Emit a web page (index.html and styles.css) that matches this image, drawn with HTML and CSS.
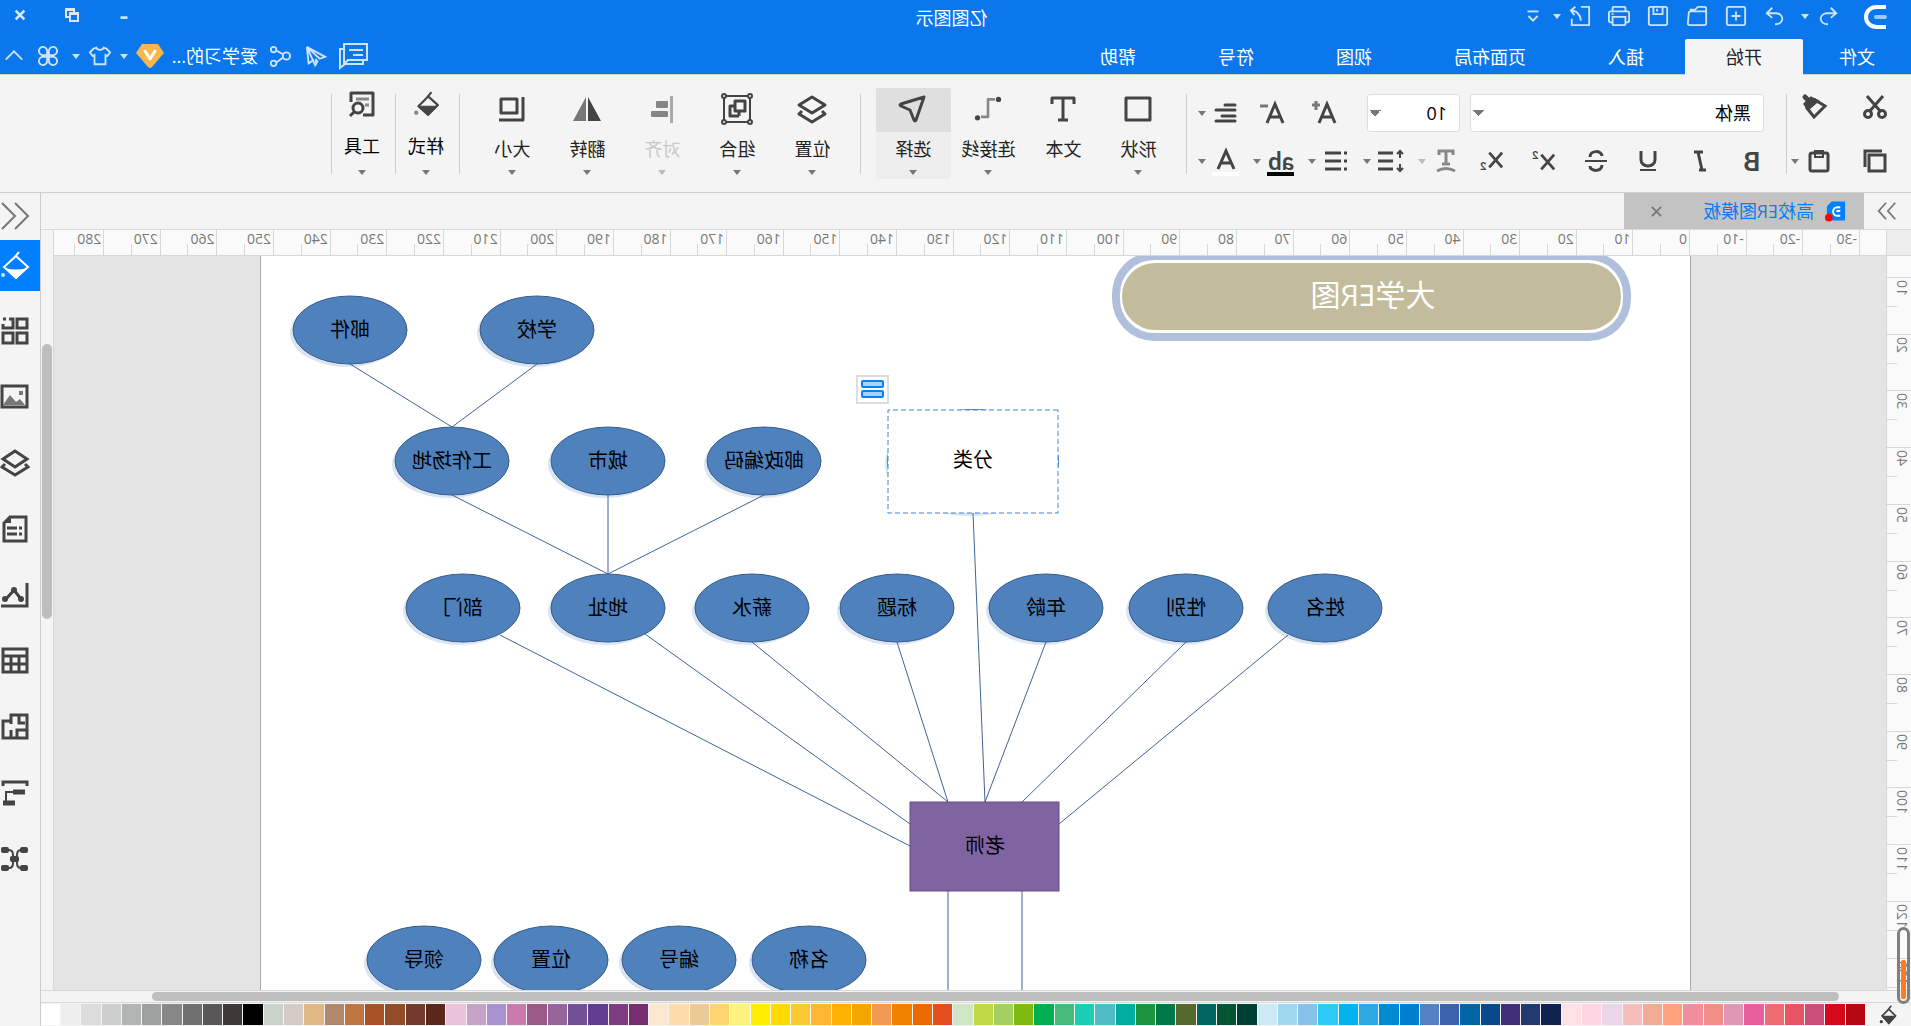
FILE: index.html
```html
<!DOCTYPE html>
<html lang="zh-CN">
<head>
<meta charset="utf-8">
<title>亿图图示</title>
<link rel="stylesheet" href="styles.css">
</head>
<body>
<div class="app">
  <header class="titlebar">
    <div class="quick">
      <svg class="logo" viewBox="0 0 24 26"><path d="M1 3h9c7 0 11 4.500 11 10s-4 10-11 10H1" fill="none" stroke="#fff" stroke-width="4"/><path d="M2 13h9" stroke="#9cc8fa" stroke-width="4" stroke-linecap="round"/></svg>
      <button class="qbtn" aria-label="撤销"><svg viewBox="0 0 24 24"><path d="M9 3 3 9l6 5M3 9h10a7 6 0 0 1 0 12h-1"/></svg></button>
      <button class="caret" aria-label="撤销列表"></button>
      <button class="qbtn redo" aria-label="重做"><svg viewBox="0 0 24 24"><path d="m15 3 6 6-6 5M21 9H11a7 6 0 0 0 0 12h1"/></svg></button>
      <button class="qbtn" aria-label="新建"><svg viewBox="0 0 24 24"><rect x="2" y="2" width="20" height="20" rx="2"/><path d="M12 7v10M7 12h10"/></svg></button>
      <button class="qbtn" aria-label="打开"><svg viewBox="0 0 24 24"><path d="M2 7h17q2 0 2 2l1 11q0 2-2 2H4q-2 0-2-2zM2 7V4q0-2 2-2h7l3 3h5v2"/></svg></button>
      <button class="qbtn" aria-label="保存"><svg viewBox="0 0 24 24"><rect x="2" y="2" width="20" height="20" rx="2"/><path d="M7 2v8h10V2M13 4v3"/></svg></button>
      <button class="qbtn" aria-label="打印"><svg viewBox="0 0 24 24"><path d="M5 7V3q0-1 1-1h12q1 0 1 1v4M5 19H3q-2 0-2-2V9q0-2 2-2h18q2 0 2 2v8q0 2-2 2h-2M5 13h14v8q0 1-1 1H6q-1 0-1-1zM18 10h2"/></svg></button>
      <button class="qbtn" aria-label="导出"><svg viewBox="0 0 24 24"><path d="M11 2H2v20h19V15M22 6c-7 0-10 4-11 11M17 2l5 4-4 5"/></svg></button>
      <button class="caret" aria-label="导出选项"></button>
      <button class="qbtn" aria-label="更多"><svg viewBox="0 0 24 24"><path d="M6 7h12" stroke-width="2"/><path d="m7 12 5 5 5-5"/></svg></button>
    </div>
    <h1 class="title">亿图图示</h1>
    <div class="winctl">
      <button aria-label="最小化"><svg viewBox="0 0 16 16"><path d="M4 11h8" stroke-width="3"/></svg></button>
      <button aria-label="还原"><svg viewBox="0 0 14 14"><path d="M1 5h8v8H1zM5 5V1h8v8H9M1 6h8M5 2h8"/></svg></button>
      <button aria-label="关闭"><svg viewBox="0 0 16 16"><path d="m3 3 10 10M13 3 3 13" stroke-width="3"/></svg></button>
    </div>
  </header>

  <div class="menubar">
    <nav class="menu">
      <a href="#file" class="file">文件</a>
      <a href="#home" class="active">开始</a>
      <a href="#insert">插入</a>
      <a href="#layout">页面布局</a>
      <a href="#view">视图</a>
      <a href="#symbol">符号</a>
      <a href="#help">帮助</a>
    </nav>
    <div class="user">
      <button class="u32" aria-label="消息"><svg viewBox="0 0 32 28"><path d="M3 2h23v20l-4-4H3zM21 8H7M17 13H7"/><path d="M26 7h4v19l-5-4H7v-4"/></svg></button>
      <button class="u28" aria-label="发送"><svg viewBox="0 0 24 24"><path d="m22 2-20 11 6 2 14-13-9 20-3-5M12 15v7M22 2l-2 18-6-4"/></svg></button>
      <button class="u28" aria-label="分享"><svg viewBox="0 0 24 24"><circle cx="5" cy="12" r="4"/><circle cx="19" cy="5" r="3"/><circle cx="19" cy="20" r="3"/><path d="m9 10 7-4M9 14l7 5"/></svg></button>
      <a class="name" href="#account">爱学习的...</a>
      <svg class="vip" viewBox="0 0 28 24"><path d="M6 0h16l6 9-12 14q-2 2-4 0L0 9z" fill="#f8b64c"/><path d="m9 7 5 8 5-8" fill="none" stroke="#fff" stroke-width="3" stroke-linecap="round" stroke-linejoin="round"/></svg>
      <button class="caret" aria-label="会员"></button>
      <button class="u24" aria-label="皮肤"><svg viewBox="0 0 24 24"><path d="M8 3c1 3 7 3 8 0l3 1 4 4-3 4-2-1v10H6V11l-2 1-3-4 4-4z"/></svg></button>
      <button class="caret skins" aria-label="皮肤列表"></button>
      <button class="u24" aria-label="应用"><svg viewBox="0 0 24 24"><path d="M11 11V7a4.500 4.500 0 1 0-4 4zM13 11V7a4.500 4.500 0 1 1 4 4zM11 13v4a4.500 4.500 0 1 1-4-4zM13 13v4a4.500 4.500 0 1 0 4-4z"/></svg></button>
      <button class="u28" aria-label="收起"><svg viewBox="0 0 24 24"><path d="m3 16 9-9 9 9"/></svg></button>
    </div>
  </div>

  <section class="ribbon">
    <div class="clip">
      <div class="line">
        <button class="tool" aria-label="剪切"><svg viewBox="0 0 24 24"><path d="m4 1 14 16M20 1 6 17"/><circle cx="5" cy="19" r="3.500"/><circle cx="19" cy="19" r="3.500"/></svg></button>
        <button class="tool second painter" aria-label="格式刷"><svg viewBox="0 0 24 24"><path d="m2 11 10-6 8 8-7 9z"/><path d="m10 6 6-3 6 6-3 5z" fill="currentColor"/><path d="m18 6 4-4" stroke-width="5" stroke-linecap="round"/></svg></button>
      </div>
      <div class="line">
        <button class="tool" aria-label="复制"><svg viewBox="0 0 24 24"><rect x="2" y="6" width="16" height="16"/><path d="M5 2h17v16"/></svg></button>
        <button class="tool second" aria-label="粘贴"><svg viewBox="0 0 24 24"><rect x="3" y="4" width="18" height="18" rx="2"/><path d="M8 2h8v6H8z" stroke-width="2"/></svg></button>
        <button class="caret" aria-label="粘贴选项"></button>
      </div>
    </div>
    <i class="sep"></i>
    <div class="font">
      <div class="row1">
        <select class="family" aria-label="字体"><option>黑体</option></select>
        <select class="size" aria-label="字号"><option>10</option></select>
        <button class="fmt grow" aria-label="增大字号"><svg viewBox="0 0 24 24"><path d="m1 22 8-19 8 19M4 16h10"/><path d="M20 0v9M16 4h8" stroke="#777"/></svg></button>
        <button class="fmt" aria-label="减小字号"><svg viewBox="0 0 24 24"><path d="m1 22 8-19 8 19M4 16h10"/><path d="M16 5h8" stroke="#777"/></svg></button>
        <div class="split"><button class="tool" aria-label="对齐方式"><svg viewBox="0 0 24 24"><path d="M3 4h10M3 9h19M3 15h13M3 20h19" stroke-linecap="round"/></svg></button><button class="caret" aria-label="对齐列表"></button></div>
      </div>
      <div class="row2">
        <button class="fmt" aria-label="粗体">B</button>
        <button class="fmt" aria-label="斜体"><svg viewBox="0 0 24 24"><path d="M9 3h9M6 21h7M14 3l-4 18"/></svg></button>
        <button class="fmt" aria-label="下划线"><svg viewBox="0 0 24 24"><path d="M5 2v9a7 6 0 0 0 14 0V2"/><path d="M4 21h16" stroke-width="2"/></svg></button>
        <button class="fmt" aria-label="删除线"><svg viewBox="0 0 24 24"><path d="M18 8c0-7-12-7-12-1M6 16c0 7 12 7 12 1"/><path d="M1 12h22" stroke-width="2"/></svg></button>
        <button class="fmt" aria-label="上标"><svg viewBox="0 0 26 24"><path d="m2 5 14 16M16 5 2 21"/><text x="19" y="10">2</text></svg></button>
        <button class="fmt" aria-label="下标"><svg viewBox="0 0 26 24"><path d="m2 3 14 16M16 3 2 19"/><text x="19" y="22">2</text></svg></button>
        <div class="split off"><button class="tool" aria-label="文字弧形"><svg viewBox="0 0 24 24"><path d="M5 6V2h14v4M12 2v12M8 15h8"/><path d="M3 22q9-5 18 0"/></svg></button><button class="caret" aria-label="弧形列表"></button></div>
        <div class="split"><button class="tool wide" aria-label="行距"><svg viewBox="0 0 28 24"><path d="M12 4h15M12 12h15M12 20h15"/><path d="M5 9V2M2 5l3-3 3 3M5 15v7M2 19l3 3 3-3" stroke-width="2"/></svg></button><button class="caret" aria-label="行距列表"></button></div>
        <div class="split"><button class="tool" aria-label="项目符号"><svg viewBox="0 0 24 24"><path d="M7 4h16M7 12h16M7 20h16M1 4h3M1 12h3M1 20h3"/></svg></button><button class="caret" aria-label="符号列表"></button></div>
        <div class="split"><button class="tool mark" aria-label="突出显示">ab</button><button class="caret" aria-label="突出颜色"></button></div>
        <div class="split"><button class="tool mark color" aria-label="字体颜色"><svg viewBox="0 0 24 24"><path d="m4 20 8-18 8 18M7 14h10"/></svg></button><button class="caret" aria-label="颜色列表"></button></div>
      </div>
    </div>
    <i class="sep s1"></i>
    <div class="bigs">
      <button class="big"><svg viewBox="0 0 28 28"><rect x="2" y="3" width="24" height="22" stroke-width="3"/></svg><span>形状</span><i class="caret"></i></button>
      <button class="big"><svg viewBox="0 0 28 28"><path d="M3 9V3h22v6M14 3v22M9 25h10" stroke-width="3"/></svg><span>文本</span></button>
      <button class="big"><svg viewBox="0 0 32 28"><path d="M8 3h8v20h8" stroke="#888" stroke-width="3"/><circle cx="4" cy="3" r="3" fill="currentColor" stroke="none"/><circle cx="28" cy="24" r="3" fill="currentColor" stroke="none"/></svg><span>连接线</span><i class="caret"></i></button>
      <button class="big on"><svg viewBox="0 0 28 28"><path d="M3 2 26 9q2 1 0 2l-9 4-4 10q-1 2-2 0z" stroke-width="3"/></svg><span>选择</span><i class="caret"></i></button>
    </div>
    <i class="sep s2"></i>
    <div class="bigs">
      <button class="big"><svg viewBox="0 0 28 28"><path d="m14 2 13 8-13 8-13-8zM4 16l-3 3 13 8 13-8-3-3" stroke-width="3"/></svg><span>位置</span><i class="caret"></i></button>
      <button class="big"><svg class="x32" viewBox="0 0 32 32"><path d="M3 3h26v26H3z" stroke-width="2"/><path d="M8 8h10v10H8zM14 23h9V13h-5M14 23v-5" stroke-width="3"/><g fill="#f4f4f4" stroke-width="2"><circle cx="3" cy="3" r="2"/><circle cx="29" cy="3" r="2"/><circle cx="3" cy="29" r="2"/><circle cx="29" cy="29" r="2"/></g></svg><span>组合</span><i class="caret"></i></button>
      <button class="big off" disabled><svg viewBox="0 0 28 28"><g fill="#858585" stroke="none"><rect x="3" y="1" width="3" height="27" fill="#aaa"/><rect x="8" y="6" width="12" height="7" rx="1"/><rect x="8" y="16" width="17" height="6" rx="1"/></g></svg><span>对齐</span><i class="caret"></i></button>
      <button class="big"><svg viewBox="0 0 28 28"><path d="M13 2v24H0z" fill="#444" stroke="none"/><path d="M15 2v24h13z" fill="#777" stroke="none"/></svg><span>翻转</span><i class="caret"></i></button>
      <button class="big"><svg viewBox="0 0 28 28"><path d="M9 4h16v14H9zM3 2v23h24" stroke-width="3"/></svg><span>大小</span><i class="caret"></i></button>
    </div>
    <i class="sep s2"></i>
    <button class="big slim"><svg viewBox="0 0 24 24"><path d="m10 5 9 9-9 8-9-9zM7 1l4 5" stroke-width="2"/><path d="M2 14h17l-9 8z" fill="currentColor"/><circle cx="21" cy="20" r="2" fill="#888" stroke="none"/></svg><span>样式</span><i class="caret"></i></button>
    <i class="sep"></i>
    <button class="big slim"><svg viewBox="0 0 26 26"><path d="M12 24H2V2h22v9" stroke-width="3"/><path d="M6 8h13M6 14h4" stroke="#888" stroke-width="3"/><circle cx="17" cy="17" r="5" stroke-width="3"/><path d="m21 21 4 4" stroke-width="3"/></svg><span>工具</span><i class="caret"></i></button>
    <i class="sep"></i>
  </section>

  <div class="body">
    <main class="main">
      <div class="tabs">
        <button class="fold" aria-label="展开左侧栏"><svg viewBox="0 0 24 24"><path d="m3 3 8 9-8 9M13 3l8 9-8 9"/></svg></button>
        <div class="tab">
          <svg class="docicon" viewBox="0 0 22 22"><path d="M1 1h14l5 5v15H1z" fill="#0080ff"/><path d="M6 7h3a4.500 4.500 0 0 1 0 9H6M6 11h4" fill="none" stroke="#fff" stroke-width="2"/><circle cx="18" cy="18" r="4" fill="red"/></svg>
          <span>高校ER图模板</span>
          <button class="close" aria-label="关闭标签"><svg viewBox="0 0 12 12"><path d="m1 1 10 10M11 1 1 11"/></svg></button>
        </div>
      </div>
      <div class="work">
        <div class="corner"></div>
        <div class="hruler" id="hruler"></div>
        <div class="vscroll"><i></i></div>
        <div class="vruler" id="vruler"></div>
        <div class="canvas">
          <svg class="diagram" width="1832" height="734">
            <rect class="sheet" x="195.500" y="-2" width="1430" height="900"/>
            <g transform="translate(-25 -256)">
              <rect x="280" y="252" width="519" height="89" rx="42" fill="#b0bfdc"/>
              <rect x="288" y="260" width="503" height="73" rx="34" fill="#fff"/>
              <rect x="290" y="263" width="499" height="67" rx="33" fill="#c3bc9c"/>
              <text class="heading" x="538" y="306">大学ER图</text>
              <g id="nodes"></g>
              <ellipse cx="941" cy="464" rx="85" ry="52" fill="#dbe5f1"/>
              <ellipse cx="938" cy="461" rx="86" ry="52" fill="#4f81bd"/>
              <path class="wire" d="M1561 364 1459 427 1374 364M1459 495 1303 574 1147 495M1303 495V574M623 635 852 824M725 642 889 802M865 642 926 802M1014 642 963 802 1159 642M1266 634 1001 824M1411 635 1001 846M938 513 926 802M963 891V995M889 891V995"/>
              <rect x="852" y="802" width="149" height="89" fill="#8064a2" stroke="#644c84"/>
              <text class="label" x="926" y="853">老师</text>
              <rect x="853" y="410" width="170" height="103" fill="#fff" stroke="#3a86d4" stroke-dasharray="5 3"/>
              <text class="label" x="938" y="467">分类</text>
              <rect x="1023" y="376" width="31" height="27" fill="#fff" stroke="#ddd" stroke-width="2"/>
              <g fill="#a8d1fb" stroke="#0a80f5" stroke-width="2"><rect x="1028" y="381" width="21" height="6" rx="1"/><rect x="1028" y="391" width="21" height="6" rx="1"/></g>
            </g>
          </svg>
        </div>
        <div class="hscroll"><i></i></div>
      </div>
      <div class="palette">
        <button class="bucket" aria-label="填充"><svg viewBox="0 0 24 24"><path d="m11 5 8 8-8 9-8-9zM8 1l5 6"/><path d="M4 14h14l-7 8z" fill="currentColor"/><circle cx="20" cy="20" r="2" fill="currentColor" stroke="none"/></svg></button>
        <div class="swatches" id="swatches"></div>
      </div>
    </main>
    <aside class="side">
      <button class="fold" aria-label="收起面板"><svg viewBox="0 0 28 28"><path d="M14 1 1 14l13 13M27 1 14 14l13 13"/></svg></button>
      <button class="panel on" aria-label="填充"><svg viewBox="0 0 28 28"><path d="m13 5 12 11-12 11L1 16zM10 1l5 6" stroke-width="2"/><path d="M2 17q11 3 22 0L13 28z" fill="#fff" stroke="none"/><circle cx="26" cy="24" r="2" fill="#cfe5ff" stroke="none"/></svg></button>
      <button class="panel" aria-label="符号库"><svg viewBox="0 0 28 28"><path d="M2 2h10v9H2zM2 16h10v10H2zM16 16h10v10H16zM20 2h-4v9h10V7M23 2h3"/></svg></button>
      <button class="panel" aria-label="图片"><svg viewBox="0 0 28 28"><rect x="2" y="3" width="25" height="21"/><path d="m4 22 5-6 4 3 6-7 7 10z" fill="#777" stroke="none"/><rect x="6" y="8" width="4" height="4" fill="#777" stroke="none"/></svg></button>
      <button class="panel" aria-label="图层"><svg viewBox="0 0 28 28"><path d="m14 2 12 8-12 8-12-8zM4 15l-3 3 13 8 13-8-3-3"/></svg></button>
      <button class="panel" aria-label="页面"><svg viewBox="0 0 28 28"><path d="M3 2h16l6 6v18H3zM7 13h3M12 13h10M7 19h3M12 19h10"/><path d="M18 2v6h6z" fill="currentColor" stroke="none"/></svg></button>
      <button class="panel" aria-label="图表"><svg viewBox="0 0 28 28"><path d="M2 2v23h26M8 18l7-9 8 9"/><g fill="currentColor" stroke="none"><circle cx="8" cy="18" r="3"/><circle cx="15" cy="9" r="3"/><circle cx="24" cy="18" r="3"/></g></svg></button>
      <button class="panel" aria-label="表格"><svg viewBox="0 0 28 28"><path d="M2 2h24v23H2zM2 9h24M2 17h24M10 9v16M18 9v16"/></svg></button>
      <button class="panel" aria-label="平面图"><svg viewBox="0 0 28 28"><path d="M2 2h16v6h8v17H2zM18 6v5M10 2v8H4M2 17h10v8M18 25v-8"/></svg></button>
      <button class="panel" aria-label="甘特图"><svg viewBox="0 0 28 28"><path d="M2 7V3h24v4"/><path d="M11 13h12v10" stroke-width="2"/><path d="M4 13h12M14 24h12" stroke-width="5"/></svg></button>
      <button class="panel" aria-label="思维导图"><svg viewBox="0 0 28 28"><path d="M5 5h3q4 0 4 5t2 4q2 1 2-4t4-5h3M5 23h3q4 0 4-5t2-4q2-1 2 4t4 5h3" stroke-width="2"/><g fill="currentColor" stroke="none"><rect x="1" y="2" width="8" height="6" rx="2"/><rect x="20" y="2" width="8" height="6" rx="2"/><rect x="1" y="20" width="8" height="6" rx="2"/><rect x="20" y="20" width="8" height="6" rx="2"/><rect x="10" y="11" width="9" height="6" rx="2"/></g></svg></button>
    </aside>
  </div>
  <div class="meter"><i></i></div>
</div>
<script src="app.js"></script>
</body>
</html>
```
FILE: styles.css
```css
* { box-sizing: border-box; }
html, body { height: 100%; margin: 0; overflow: hidden; }
body { font: 18px/24px "Open Sans", "Noto Sans CJK SC", sans-serif; color: #222; }
button { border: 0; padding: 0; background: none; font: inherit; color: inherit; display: flex; align-items: center; justify-content: center; flex: none; }
a { color: inherit; text-decoration: none; }
svg { flex: none; overflow: visible; }
button svg { fill: none; stroke: currentColor; }

/* The whole window is shown as in a mirror */
.app { position: relative; height: 100vh; display: flex; flex-direction: column; background: #f4f4f4; transform: scaleX(-1); }

.caret { width: 8px; height: 12px; color: #777; }
.caret::before { content: ""; border: 4px solid transparent; border-top: 5px solid currentColor; border-bottom: 0; }

.titlebar { display: grid; grid-template-columns: 1fr auto 1fr; align-items: center; height: 38px; flex: none; background: #0a77ed; color: #fff; }
.titlebar .caret, .menubar .caret { color: #cfe4fc; }
.quick { display: flex; align-items: center; height: 38px; padding: 0 0 6px 24px; }
.logo { width: 24px; height: 26px; margin: 2px 15px 0 0; }
.qbtn { width: 39px; height: 28px; color: #cfe4fc; }
.qbtn svg { width: 22px; height: 22px; stroke-width: 2; }
.redo { margin-left: 6px; }
.title { margin: 0 0 2px 8px; font-size: 18px; line-height: 24px; font-weight: 400; }
.winctl { display: flex; justify-content: flex-end; gap: 12px; padding-bottom: 8px; }
.winctl button { width: 40px; height: 24px; color: #d8e9fd; }
.winctl svg { width: 14px; height: 14px; stroke-width: 2; }

.menubar { display: flex; justify-content: space-between; height: 36px; flex: none; background: #0a77ed; color: #fff; }
.menu { display: flex; }
.menu a { padding: 6px 41px; margin-top: 1px; height: 36px; }
.menu .file { padding: 6px 36px; }
.menu .active { position: relative; background: #f4f4f4; color: #222; border-radius: 2px 2px 0 0; z-index: 1; }
.user { display: flex; align-items: center; gap: 8px; color: #cfe4fc; }
.user svg { stroke-width: 2; }
.u32, .u32 svg { width: 32px; height: 28px; }
.u28 { width: 28px; height: 28px; }
.u24 { width: 24px; height: 28px; }
.u28 svg, .u24 svg { width: 22px; height: 22px; }
.user .name { color: #fff; width: 86px; white-space: nowrap; }
.user .skins { margin-right: 4px; }
.vip { width: 28px; height: 24px; }

.ribbon { display: flex; align-items: flex-start; height: 119px; flex: none; border-top: 1px solid #d0d0d0; border-bottom: 1px solid #d0d0d0; color: #444; }
.sep { width: 1px; height: 80px; margin-top: 19px; background: #ccc; flex: none; }
.s1 { margin: 19px 10px 0 11px; }
.s2 { margin: 19px 0 0 15px; }
.s2 + .bigs { margin-left: 10px; }
.clip { width: 124px; padding: 17px 0 0 14px; display: flex; flex-direction: column; gap: 24px; }
.line { display: flex; align-items: center; height: 30px; }
.line .tool { width: 44px; }
.line .second { width: 40px; margin-left: 14px; }
.line .painter { width: 48px; }
.tool { width: 40px; height: 30px; }
.tool svg, .fmt svg { width: 24px; height: 24px; stroke-width: 3; }
.tool.wide svg { width: 28px; }
.font { padding: 19px 0 0 8px; display: flex; flex-direction: column; gap: 14px; }
.row1, .row2 { display: flex; align-items: center; }
.row1 { height: 38px; padding-left: 14px; }
.row2 { height: 30px; }
select { appearance: none; height: 38px; padding: 0 12px; border: 1px solid #ddd; border-radius: 3px; color: #000; font: 18px/24px "Open Sans", "Noto Sans CJK SC", sans-serif; background: #fff conic-gradient(from 315deg at 6px 6px, #777 90deg, transparent 0) no-repeat right 1px center / 12px 6px; }
.family { width: 294px; margin-right: 10px; }
.size { width: 93px; }
.fmt { width: 52px; height: 30px; font: 700 26px/30px Lato, sans-serif; }
.fmt svg text { font: 700 12px/12px Lato, sans-serif; fill: currentColor; stroke: none; }
.grow { margin-left: auto; }
.split { display: flex; align-items: center; margin-right: 7px; }
.row1 .split, .split:last-child { margin-right: 0; }
.mark { font: 700 24px/26px Lato, sans-serif; background: linear-gradient(#000, #000) no-repeat center 26px / 27px 4px; }
.color { background-image: linear-gradient(#fff, #fff); }
.off { color: #888; }
.off .caret { color: #bbb; }

.bigs { display: flex; }
.big { width: 75px; height: 91px; margin-top: 13px; flex-direction: column; justify-content: flex-start; color: #444; border-radius: 2px; }
.big svg { width: 28px; height: 28px; margin: 7px 24px 9px; stroke-linejoin: round; }
.big .x32 { width: 32px; height: 32px; margin: 5px 22px 7px; }
.big span { line-height: 24px; margin-top: 5px; color: #222; }
.big i { margin-top: 2px; display: flex; align-items: flex-end; }
.big.off span { color: #c8c8c8; }
.big.on { background: linear-gradient(#dfdfdf 44px, #ededed 0); }
.big.slim { width: 63px; padding-left: 3px; }
.slim svg { width: 26px; height: 26px; margin: 3px 17px 12px; }
.slim i { margin-top: 5px; }
.big.slim span { color: #000; }

.body { flex: 1; min-height: 0; display: flex; }
.main { flex: 1; min-width: 0; display: flex; flex-direction: column; }
.tabs { display: flex; height: 37px; flex: none; border-bottom: 1px solid #d8d8d8; color: #777; }
.fold svg { width: 22px; height: 22px; stroke-width: 2; }
.tabs .fold { width: 47px; }
.tab { display: flex; align-items: center; width: 240px; padding: 0 27px 0 18px; gap: 11px; background: #c3c3c3; color: #0a7cf5; white-space: nowrap; }
.docicon { width: 21px; height: 22px; }
.close { margin-left: auto; width: 12px; height: 24px; color: #777; }
.close svg { width: 11px; height: 11px; stroke-width: 2; }

.work { flex: 1; min-height: 0; display: grid; grid-template: 26px 1fr 13px / 25px 1fr 13px; }
.corner { background: #ededed; border-right: 1px solid #d8d8d8; border-bottom: 1px solid #d8d8d8; }
.hruler { display: flex; padding-left: 26px; background: #fafafa; border-bottom: 1px solid #d8d8d8; font-size: 14px; line-height: 18px; color: #777; overflow: hidden; }
.hruler span { position: relative; flex: 17 1 0; min-width: 0; border-left: 1px solid #d8d8d8; padding-left: 2px; }
.hruler span:last-child { flex-grow: 15; }
.hruler span::after { content: ""; position: absolute; left: 28px; bottom: 0; width: 1px; height: 11px; background: #d8d8d8; }
.vruler { display: flex; flex-direction: column; padding-top: 21px; background: #fafafa; border-right: 1px solid #d8d8d8; font-size: 14px; line-height: 14px; color: #777; overflow: hidden; }
.vruler span { position: relative; flex: 170 1 0; min-height: 0; border-top: 1px solid #d8d8d8; }
.vruler span:last-child { flex-grow: 96; }
.vruler b { position: absolute; left: 2px; top: 2px; font-weight: 400; writing-mode: vertical-rl; rotate: 180deg; }
.vruler span::after { content: ""; position: absolute; right: 0; top: 28px; width: 10px; height: 1px; background: #d8d8d8; }
.vscroll { grid-area: 1 / 3 / 3 / 4; padding: 114px 1px 0; border-left: 1px solid #d8d8d8; }
.vscroll i { display: block; width: 10px; height: 275px; border-radius: 5px; background: #bebebe; }
.canvas { background: #e4e4e4; overflow: hidden; }
.diagram { display: block; }
.sheet { fill: #fff; stroke: #aaa; }
.wire { fill: none; stroke: #3f6499; }
.label { font-size: 20px; text-anchor: middle; fill: #000; }
.heading { font-size: 30px; text-anchor: middle; fill: #fff; }
.hscroll { grid-column: 1 / 4; border-top: 1px solid #d8d8d8; border-bottom: 1px solid #d8d8d8; padding: 1px 111px 1px 72px; }
.hscroll i { display: block; height: 9px; border-radius: 5px; background: #bebebe; }

.palette { display: flex; height: 23px; flex: none; padding: 1px 0; }
.bucket { width: 46px; color: #444; }
.bucket svg { width: 20px; height: 20px; stroke-width: 2; }
.swatches { flex: 1; display: flex; gap: 1px; }
.swatches button { flex: 1; }

.side { width: 41px; flex: none; border-left: 1px solid #ccc; color: #444; display: flex; flex-direction: column; }
.side button { padding: 0 0 1px 10px; }
.side svg { width: 28px; height: 28px; stroke-width: 3; }
.side .fold { height: 47px; color: #777; }
.side .fold svg { stroke-width: 2; }
.panel { height: 51px; margin-bottom: 15px; }
.panel.on { background: #0080ff; color: #fff; }

.meter { position: absolute; left: 1px; bottom: 22px; width: 13px; height: 77px; padding: 30px 1px 0; border: 3px solid #7f7f7f; border-radius: 7px; }
.meter i { display: block; width: 5px; height: 39px; border-radius: 2px; background: #ff7a22; }
```
FILE: app.js
```js
// Ruler marks, ten units apart
const hruler = document.getElementById('hruler');
for (let n = -30; n <= 280; n += 10) {
  const s = document.createElement('span');
  s.textContent = n;
  hruler.append(s);
}
const vruler = document.getElementById('vruler');
for (let n = 10; n <= 130; n += 10) {
  const s = document.createElement('span');
  const b = document.createElement('b');
  b.textContent = n;
  s.append(b);
  vruler.append(s);
}

// Attribute nodes of the ER diagram
const nodes = [
  ['邮件', 1561, 330], ['学校', 1374, 330], ['工作场地', 1459, 461], ['城市', 1303, 461], ['邮政编码', 1147, 461],
  ['部门', 1448, 608], ['地址', 1303, 608], ['薪水', 1159, 608], ['标题', 1014, 608], ['年龄', 865, 608],
  ['性别', 725, 608], ['姓名', 586, 608], ['领导', 1487, 960], ['位置', 1360, 960], ['编号', 1232, 960], ['名称', 1102, 960]
];
document.getElementById('nodes').innerHTML = nodes.map(([t, x, y]) =>
  `<ellipse cx="${x + 3}" cy="${y + 3}" rx="57" ry="34" fill="#dbe5f1"/>` +
  `<ellipse cx="${x}" cy="${y}" rx="57" ry="34" fill="#4f81bd" stroke="#385d8a"/>` +
  `<text class="label" x="${x}" y="${y + 7}">${t}</text>`).join('');

const colors = ('b50815 d8081c c94f7a e85464 ed6d72 e85f9f e096b5 f08e87 f28d9b ffa27c f0ab95 f5bebb ead6e8 ffd5e4 ffe0e5 ' +
  '10224e 233a70 3f2f7a 08498e 0066a6 3e61ae 5382c3 007fcf 008bd0 2da8e3 00b4f0 30caf9 88c1ea a0d9ef cdeaf5 ' +
  '003f33 005532 006460 55692f 007848 1f943f 00ae9f 52bcc4 1acdb4 48ba7c 00b050 80b90f a3cf63 c1d947 cee6c6 ' +
  'e34f1f ec6800 f18200 f39a52 f3a500 ffb000 fdb733 f9ca31 ffd900 ffec00 fdf27e ffd470 eacb98 fddbaa fde7cf ' +
  '762e70 7f3c82 633d92 725095 96669b 9b5987 cb7aae a791ce c5a3c6 eac2da 59281a 733b2f 934c28 a85327 bf7640 ' +
  'b3876c deb783 d4cbc5 c9d3ca 000000 3e3837 595757 707070 888888 9e9f9f b3b5b5 cccfce dcdcdc eeeeee ffffff').split(' ');
const swatches = document.getElementById('swatches');
for (const c of colors) {
  const b = document.createElement('button');
  b.style.background = '#' + c;
  b.setAttribute('aria-label', '#' + c);
  swatches.append(b);
}
```
